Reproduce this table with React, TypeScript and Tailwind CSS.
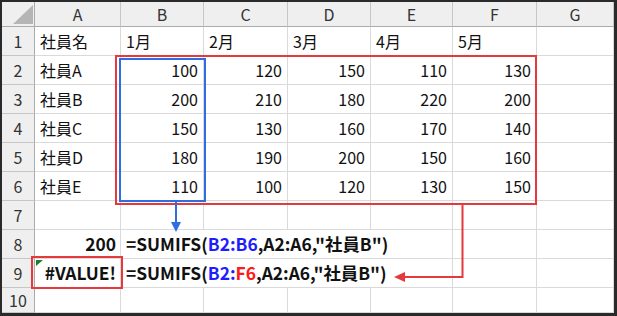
import React from "react";

const FONT = { fontFamily: '"Noto Sans CJK JP", "Noto Sans", sans-serif' };

type Cell = { t: string; align?: "l" | "r" };

const data: Cell[][] = [
  [{ t: "社員名" }, { t: "1月" }, { t: "2月" }, { t: "3月" }, { t: "4月" }, { t: "5月" }, { t: "" }],
  [{ t: "社員A" }, { t: "100", align: "r" }, { t: "120", align: "r" }, { t: "150", align: "r" }, { t: "110", align: "r" }, { t: "130", align: "r" }, { t: "" }],
  [{ t: "社員B" }, { t: "200", align: "r" }, { t: "210", align: "r" }, { t: "180", align: "r" }, { t: "220", align: "r" }, { t: "200", align: "r" }, { t: "" }],
  [{ t: "社員C" }, { t: "150", align: "r" }, { t: "130", align: "r" }, { t: "160", align: "r" }, { t: "170", align: "r" }, { t: "140", align: "r" }, { t: "" }],
  [{ t: "社員D" }, { t: "180", align: "r" }, { t: "190", align: "r" }, { t: "200", align: "r" }, { t: "150", align: "r" }, { t: "160", align: "r" }, { t: "" }],
  [{ t: "社員E" }, { t: "110", align: "r" }, { t: "100", align: "r" }, { t: "120", align: "r" }, { t: "130", align: "r" }, { t: "150", align: "r" }, { t: "" }],
  [{ t: "" }, { t: "" }, { t: "" }, { t: "" }, { t: "" }, { t: "" }, { t: "" }],
];

const cellBase = "border-r border-b border-[#dadada] flex items-center px-[5px] text-[16px] text-[#111] whitespace-nowrap";
const headBase = "border-r border-b border-[#c6c6c6] bg-[#efefef] flex items-center justify-center text-[16px] text-[#333]";

function RowHead({ n }: { n: number }) {
  return <div className={headBase + " border-r-[#ababab]"}>{n}</div>;
}

export default function App() {
  return (
    <div className="w-[617px] h-[316px] bg-white border-l-2 border-t-2 border-r-[3px] border-b-[3px] border-[#2a2a2a] overflow-hidden" style={FONT}>
      <div className="relative grid grid-cols-[33px_86px_83px_84px_83px_82px_84px_77px] grid-rows-[25px_repeat(9,29px)_25px] leading-none">
        {/* header row */}
        <div className={headBase + " relative border-b-[#ababab] border-r-[#ababab]"}>
          <svg className="absolute left-[11px] top-[3px]" width="20" height="20" viewBox="0 0 20 20">
            <polygon points="20,0 20,19 0,19" fill="#b5b5b5" />
          </svg>
        </div>
        {["A", "B", "C", "D", "E", "F", "G"].map((c) => (
          <div key={c} className={headBase + " border-b-[#ababab]"}>{c}</div>
        ))}

        {data.map((row, i) => (
          <React.Fragment key={i}>
            <RowHead n={i + 1} />
            {row.map((c, j) => (
              <div key={j} className={cellBase + (c.align === "r" ? " justify-end" : " justify-start")}>
                {c.t}
              </div>
            ))}
          </React.Fragment>
        ))}

        {/* row 8 */}
        <RowHead n={8} />
        <div className={cellBase + " justify-end font-bold text-[17.4px] pr-[4px]"}>200</div>
        <div className={cellBase + " col-span-4 justify-start font-bold text-[17.4px] overflow-visible pl-[5px]"}>
          <span>=SUMIFS(</span>
          <span className="text-[#1d1dff]">B2:B6</span>
          <span>,A2:A6,"社員B")</span>
        </div>
        <div className={cellBase} />
        <div className={cellBase} />

        {/* row 9 */}
        <RowHead n={9} />
        <div className={cellBase + " justify-end font-bold text-[17.4px] pr-[4px]"}>#VALUE!</div>
        <div className={cellBase + " col-span-4 justify-start font-bold text-[17.4px] overflow-visible pl-[5px]"}>
          <span>=SUMIFS(</span>
          <span className="text-[#1d1dff]">B2:</span>
          <span className="text-[#ff1a1a]">F6</span>
          <span>,A2:A6,"社員B")</span>
        </div>
        <div className={cellBase} />
        <div className={cellBase} />

        {/* row 10 */}
        <RowHead n={10} />
        {[0, 1, 2, 3, 4, 5, 6].map((j) => (
          <div key={j} className={cellBase} />
        ))}

        {/* overlays (coordinates relative to grid at page 2,2) */}
        <div className="absolute left-[113px] top-[53px] w-[422px] h-[150px] border-2 border-[#e6393e]" />
        <div className="absolute left-[117px] top-[56px] w-[87px] h-[144px] border-2 border-[#2f6de0]" />
        <div className="absolute left-[29px] top-[254px] w-[92px] h-[33px] border-2 border-[#e6393e]" />

        <svg className="absolute left-0 top-0 pointer-events-none" width="612" height="311" viewBox="0 0 612 311">
          {/* blue arrow */}
          <line x1="174" y1="200" x2="174" y2="221" stroke="#2f6de0" strokeWidth="2" />
          <polygon points="169,220 179,220 174,230" fill="#2f6de0" />
          {/* red connector */}
          <polyline points="460.5,203 460.5,275 401,275" fill="none" stroke="#e6393e" strokeWidth="2" />
          <polygon points="392,275 403,270 403,280" fill="#e6393e" />
          {/* green error triangle */}
          <polygon points="34,258 41,258 34,264" fill="#1b7f2a" />
        </svg>
      </div>
    </div>
  );
}
